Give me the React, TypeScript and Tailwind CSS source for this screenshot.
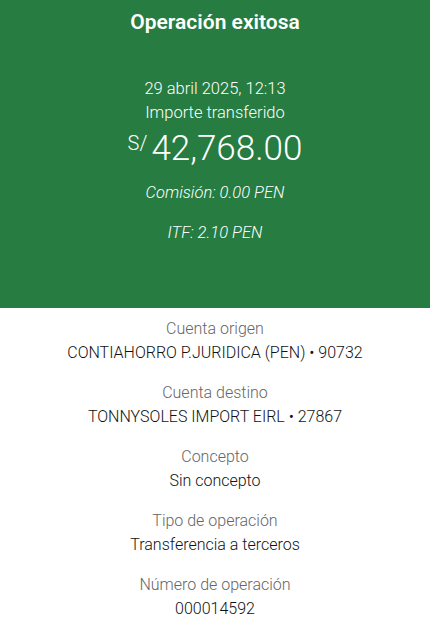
export default function App() {
  const rows = [
    { label: "Cuenta origen", value: "CONTIAHORRO P.JURIDICA (PEN) • 90732" },
    { label: "Cuenta destino", value: "TONNYSOLES IMPORT EIRL • 27867" },
    { label: "Concepto", value: "Sin concepto" },
    { label: "Tipo de operación", value: "Transferencia a terceros" },
    { label: "Número de operación", value: "000014592" },
  ];

  return (
    <div className="min-h-screen w-full bg-white font-['Roboto',sans-serif]">
      <section className="flex h-[308px] flex-col items-center bg-[#267c41] text-white">
        <h1 className="mt-[8px] text-[21px] font-semibold leading-[28px]">Operación exitosa</h1>
        <p className="mt-[41px] text-[16.5px] font-light leading-[24px]">29 abril 2025, 12:13</p>
        <p className="text-[16.5px] font-light leading-[24px]">Importe transferido</p>
        <div className="mt-[2px] flex items-start font-light">
          <span className="mt-[4px] mr-[4px] text-[20px] leading-[24px]">S/</span>
          <span className="text-[35px] leading-[44px]">42,768.00</span>
        </div>
        <p className="mt-[10px] text-[16.5px] font-light italic leading-[24px]">Comisión: 0.00 PEN</p>
        <p className="mt-[16px] text-[16.5px] font-light italic leading-[24px]">ITF: 2.10 PEN</p>
      </section>
      <section className="flex flex-col items-center pt-[1px]">
        {rows.map((r) => (
          <div key={r.label} className="flex h-[64px] flex-col items-center pt-[8px]">
            <p className="text-[16px] font-light leading-[24px] text-[#666666]">{r.label}</p>
            <p className="text-[16px] font-light leading-[24px] text-[#121212]">{r.value}</p>
          </div>
        ))}
      </section>
    </div>
  );
}
